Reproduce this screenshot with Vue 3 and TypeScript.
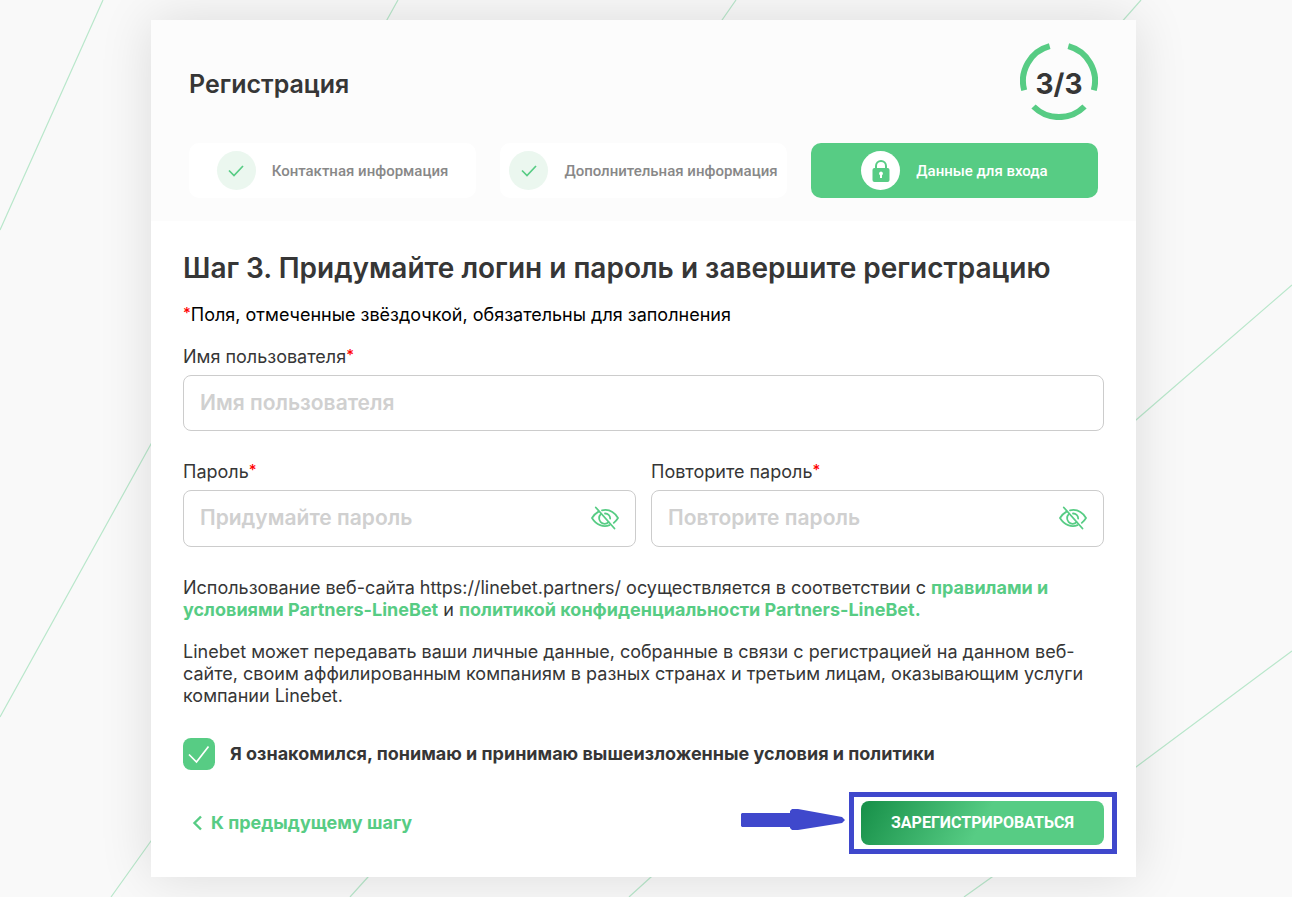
<script setup lang="ts">
import { ref } from 'vue'

interface Step {
  title: string
  done: boolean
}

interface PasswordField {
  id: string
  label: string
  placeholder: string
}

const steps: Step[] = [
  { title: 'Контактная информация', done: true },
  { title: 'Дополнительная информация', done: true },
  { title: 'Данные для входа', done: false },
]

const passwordFields: PasswordField[] = [
  { id: 'password', label: 'Пароль', placeholder: 'Придумайте пароль' },
  { id: 'password-repeat', label: 'Повторите пароль', placeholder: 'Повторите пароль' },
]

const username = ref('')
const passwords = ref<string[]>(['', ''])
const visible = ref<boolean[]>([false, false])
const accepted = ref(true)
</script>

<template>
  <div class="page">
    <svg class="backdrop" viewBox="0 0 1292 897" preserveAspectRatio="none" aria-hidden="true">
      <path d="M103 0L0 230M398 0L151 444L0 717M736 0L151 841L111 897M1141 0L368 877L350 897M1292 285L1136 420L651 877L629 897M1292 651L1136 767L992 877L964 897" />
    </svg>

    <main class="card">
      <header class="head">
        <div class="head-row">
          <h1 class="title">Регистрация</h1>
          <div class="progress">
            <svg class="ring" viewBox="0 0 78 78" aria-hidden="true">
              <path d="M48.3 4.2A36 36 0 0 1 73.8 48.3M64.5 64.5A36 36 0 0 1 13.5 64.5M4.2 48.3A36 36 0 0 1 29.7 4.2" />
            </svg>
            <span class="count">3/3</span>
          </div>
        </div>
        <ol class="steps">
          <li v-for="step in steps" :key="step.title" class="step" :class="{ active: !step.done }">
            <span class="badge">
              <svg v-if="step.done" class="tick" viewBox="0 0 16 12" aria-hidden="true">
                <path d="M1 5.5L6 10.5L15 1" />
              </svg>
              <svg v-else class="lock" viewBox="0 0 18 22" aria-hidden="true">
                <path class="shackle" d="M4 9V6a5 5 0 0 1 10 0V9" />
                <rect x="0.5" y="8" width="17" height="14" rx="2" />
                <path class="hole" d="M9 11.500a2 2 0 0 1 1 3.700V18H8v-2.800a2 2 0 0 1 1-3.700z" />
              </svg>
            </span>
            <span>{{ step.title }}</span>
          </li>
        </ol>
      </header>

      <form class="body" @submit.prevent>
        <h2 class="heading">Шаг 3. Придумайте логин и пароль и завершите регистрацию</h2>
        <p class="note"><span class="star">*</span>Поля, отмеченные звёздочкой, обязательны для заполнения</p>

        <div class="field">
          <label class="label" for="username">Имя пользователя<span class="star">*</span></label>
          <input id="username" v-model="username" class="input" type="text" placeholder="Имя пользователя" />
        </div>

        <div class="columns">
          <div v-for="(field, i) in passwordFields" :key="field.id" class="field">
            <label class="label" :for="field.id">{{ field.label }}<span class="star">*</span></label>
            <div class="control">
              <input
                :id="field.id"
                v-model="passwords[i]"
                class="input"
                :type="visible[i] ? 'text' : 'password'"
                :placeholder="field.placeholder"
              />
              <button class="eye" type="button" aria-label="Показать пароль" @click="visible[i] = !visible[i]">
                <svg viewBox="0 0 28 24" aria-hidden="true">
                  <path d="M11 4.300C17 3 23 5.500 27 12c-1.200 2-2.600 3.600-4.200 4.900M7.500 5.600C5 7 2.800 9.200 1 12c4.300 7 11.500 9.800 17.500 7.200" />
                  <path d="M9.800 8.200a5.500 5.500 0 1 0 7.800 8M14 7.500a5 5 0 0 1 5.200 5" />
                  <path d="M4.800 1.500L23.500 22.500" />
                </svg>
              </button>
            </div>
          </div>
        </div>

        <p class="text terms">
          Использование веб-сайта https://linebet.partners/ осуществляется в соответствии с
          <a href="#terms">правилами и условиями Partners-LineBet</a> и
          <a href="#privacy">политикой конфиденциальности Partners-LineBet.</a>
        </p>
        <p class="text">
          Linebet может передавать ваши личные данные, собранные в связи с регистрацией на данном веб-сайте, своим
          аффилированным компаниям в разных странах и третьим лицам, оказывающим услуги компании Linebet.
        </p>

        <label class="agree">
          <span class="check">
            <input v-model="accepted" type="checkbox" />
            <svg v-if="accepted" viewBox="0 0 32 32" aria-hidden="true"><path d="M6 16.500L13.500 24L25.500 8.500" /></svg>
          </span>
          <span>Я ознакомился, понимаю и принимаю вышеизложенные условия и политики</span>
        </label>

        <div class="actions">
          <a class="back" href="#step-2">
            <svg viewBox="0 0 10 16" aria-hidden="true"><path d="M9 1.500L2.500 8L9 14.500" /></svg>
            <span>К предыдущему шагу</span>
          </a>
          <div class="submit-wrap">
            <button class="submit" type="submit">ЗАРЕГИСТРИРОВАТЬСЯ</button>
            <svg class="arrow" viewBox="0 0 104 23" aria-hidden="true">
              <path d="M1 5H49V3L51 1H57L101 9L104 12L101 15L57 22H51L49 20V19H1L0 18V6Z" />
            </svg>
            <span class="frame"></span>
          </div>
        </div>
      </form>
    </main>
  </div>
</template>

<style>
body {
  margin: 0;
  background: #f9f9f9;
}
</style>

<style scoped>
.page {
  position: relative;
  box-sizing: border-box;
  min-height: 100vh;
  padding: 20px 156px 20px 151px;
  overflow: hidden;
  background: #f9f9f9;
  color: #363636;
  font-family: Inter, "Noto Sans", sans-serif;
}

.backdrop {
  position: absolute;
  inset: 0;
  width: 100%;
  height: 100%;
  fill: none;
  stroke: #b9e7cb;
  stroke-width: 1.2;
}

.card {
  position: relative;
  background: #fff;
  box-shadow: 0 0 50px rgba(0, 0, 0, 0.12);
}

h1,
h2,
p,
ol {
  margin: 0;
  padding: 0;
}

.head {
  padding: 22px 38px 23px;
  background: #fcfcfc;
}

.head-row {
  display: flex;
  align-items: center;
  justify-content: space-between;
  margin-bottom: 23px;
}

.title {
  padding-top: 6px;
  font-size: 25px;
  line-height: 32px;
  font-weight: 600;
}

.progress {
  display: grid;
  place-items: center;
  width: 78px;
  height: 78px;
}

.ring,
.count {
  grid-area: 1 / 1;
}

.ring {
  width: 78px;
  height: 78px;
  fill: none;
  stroke: #57cc84;
  stroke-width: 6;
}

.count {
  padding-top: 6px;
  font-size: 28px;
  line-height: 32px;
  font-weight: 700;
}

.steps {
  display: grid;
  grid-template-columns: repeat(3, 1fr);
  gap: 24px;
  list-style: none;
}

.step {
  display: flex;
  align-items: center;
  justify-content: center;
  gap: 16px;
  height: 55px;
  border-radius: 10px;
  background: #fff;
  color: #888;
  font: 500 15px/20px Roboto, "Noto Sans", sans-serif;
  white-space: nowrap;
}

.step.active {
  background: #57cc84;
  color: #fff;
}

.badge {
  display: grid;
  place-items: center;
  width: 39px;
  height: 39px;
  border-radius: 50%;
  background: #ebf7ef;
}

.active .badge {
  background: #fff;
}

.tick {
  width: 16px;
  height: 12px;
  fill: none;
  stroke: #57cc84;
  stroke-width: 1.7;
}

.lock {
  width: 18px;
  height: 22px;
  fill: #57cc84;
}

.shackle {
  fill: none;
  stroke: #57cc84;
  stroke-width: 2;
}

.hole {
  fill: #fff;
}

.body {
  padding: 29px 32px 32px;
}

.heading {
  margin-bottom: 18px;
  font-size: 28px;
  line-height: 36px;
  font-weight: 600;
  white-space: nowrap;
}

.note {
  margin-bottom: 20px;
  color: #000;
  font-size: 18px;
  line-height: 22px;
}

.star {
  color: #f00;
  font-size: 15px;
  line-height: 18px;
  font-weight: 500;
  vertical-align: top;
}

.field {
  display: flex;
  flex-direction: column;
  gap: 7px;
}

.label {
  font-size: 18px;
  line-height: 22px;
}

.input {
  box-sizing: border-box;
  display: block;
  width: 100%;
  height: 56px;
  padding: 0 16px 2px;
  border: 1px solid #ccc;
  border-radius: 8px;
  outline: none;
  background: #fff;
  color: #363636;
  font: 600 21px/28px Inter, "Noto Sans", sans-serif;
}

.input::placeholder {
  color: #d0d0d0;
  opacity: 1;
}

.columns {
  display: grid;
  grid-template-columns: 1fr 1fr;
  gap: 15px;
  margin: 30px 0;
}

.control {
  position: relative;
}

.control .input {
  height: 57px;
}

.eye {
  position: absolute;
  top: 16px;
  right: 17px;
  width: 28px;
  height: 24px;
  padding: 0;
  border: 0;
  background: none;
  cursor: pointer;
}

.eye svg {
  display: block;
  fill: none;
  stroke: #57cc84;
  stroke-width: 1.8;
  stroke-linecap: round;
}

.text {
  font-size: 18px;
  line-height: 22px;
}

.terms {
  margin-bottom: 20px;
}

a {
  color: #57cc84;
  font-weight: 700;
  text-decoration: none;
}

.agree {
  display: flex;
  align-items: center;
  gap: 15px;
  margin: 31px 0;
  font-size: 18px;
  line-height: 22px;
  font-weight: 700;
}

.check {
  display: grid;
  width: 32px;
  height: 32px;
}

.check input,
.check svg {
  grid-area: 1 / 1;
  width: 32px;
  height: 32px;
  margin: 0;
}

.check input {
  appearance: none;
  border-radius: 8px;
  background: #57cc84;
}

.check svg {
  fill: none;
  stroke: #fff;
  stroke-width: 1.7;
  pointer-events: none;
}

.actions {
  display: flex;
  align-items: center;
  justify-content: space-between;
}

.back {
  display: flex;
  align-items: center;
  gap: 9px;
  padding-left: 9px;
  font-size: 18px;
  line-height: 22px;
  font-weight: 700;
}

.back svg {
  width: 10px;
  height: 16px;
  fill: none;
  stroke: #57cc84;
  stroke-width: 2.4;
}

.submit-wrap {
  position: relative;
}

.submit {
  display: block;
  width: 243px;
  height: 44px;
  padding: 0;
  border: 0;
  border-radius: 8px;
  background: linear-gradient(120deg, #168f48, #57cc84 50%);
  color: #fff;
  font: 700 16px/20px Roboto, "Noto Sans", sans-serif;
  cursor: pointer;
}

.frame {
  position: absolute;
  inset: -9px -13px -9px -12px;
  border: 5px solid #3f48cc;
  pointer-events: none;
}

.arrow {
  position: absolute;
  top: 7px;
  right: 259px;
  width: 104px;
  height: 23px;
  fill: #3f48cc;
  pointer-events: none;
}
</style>
